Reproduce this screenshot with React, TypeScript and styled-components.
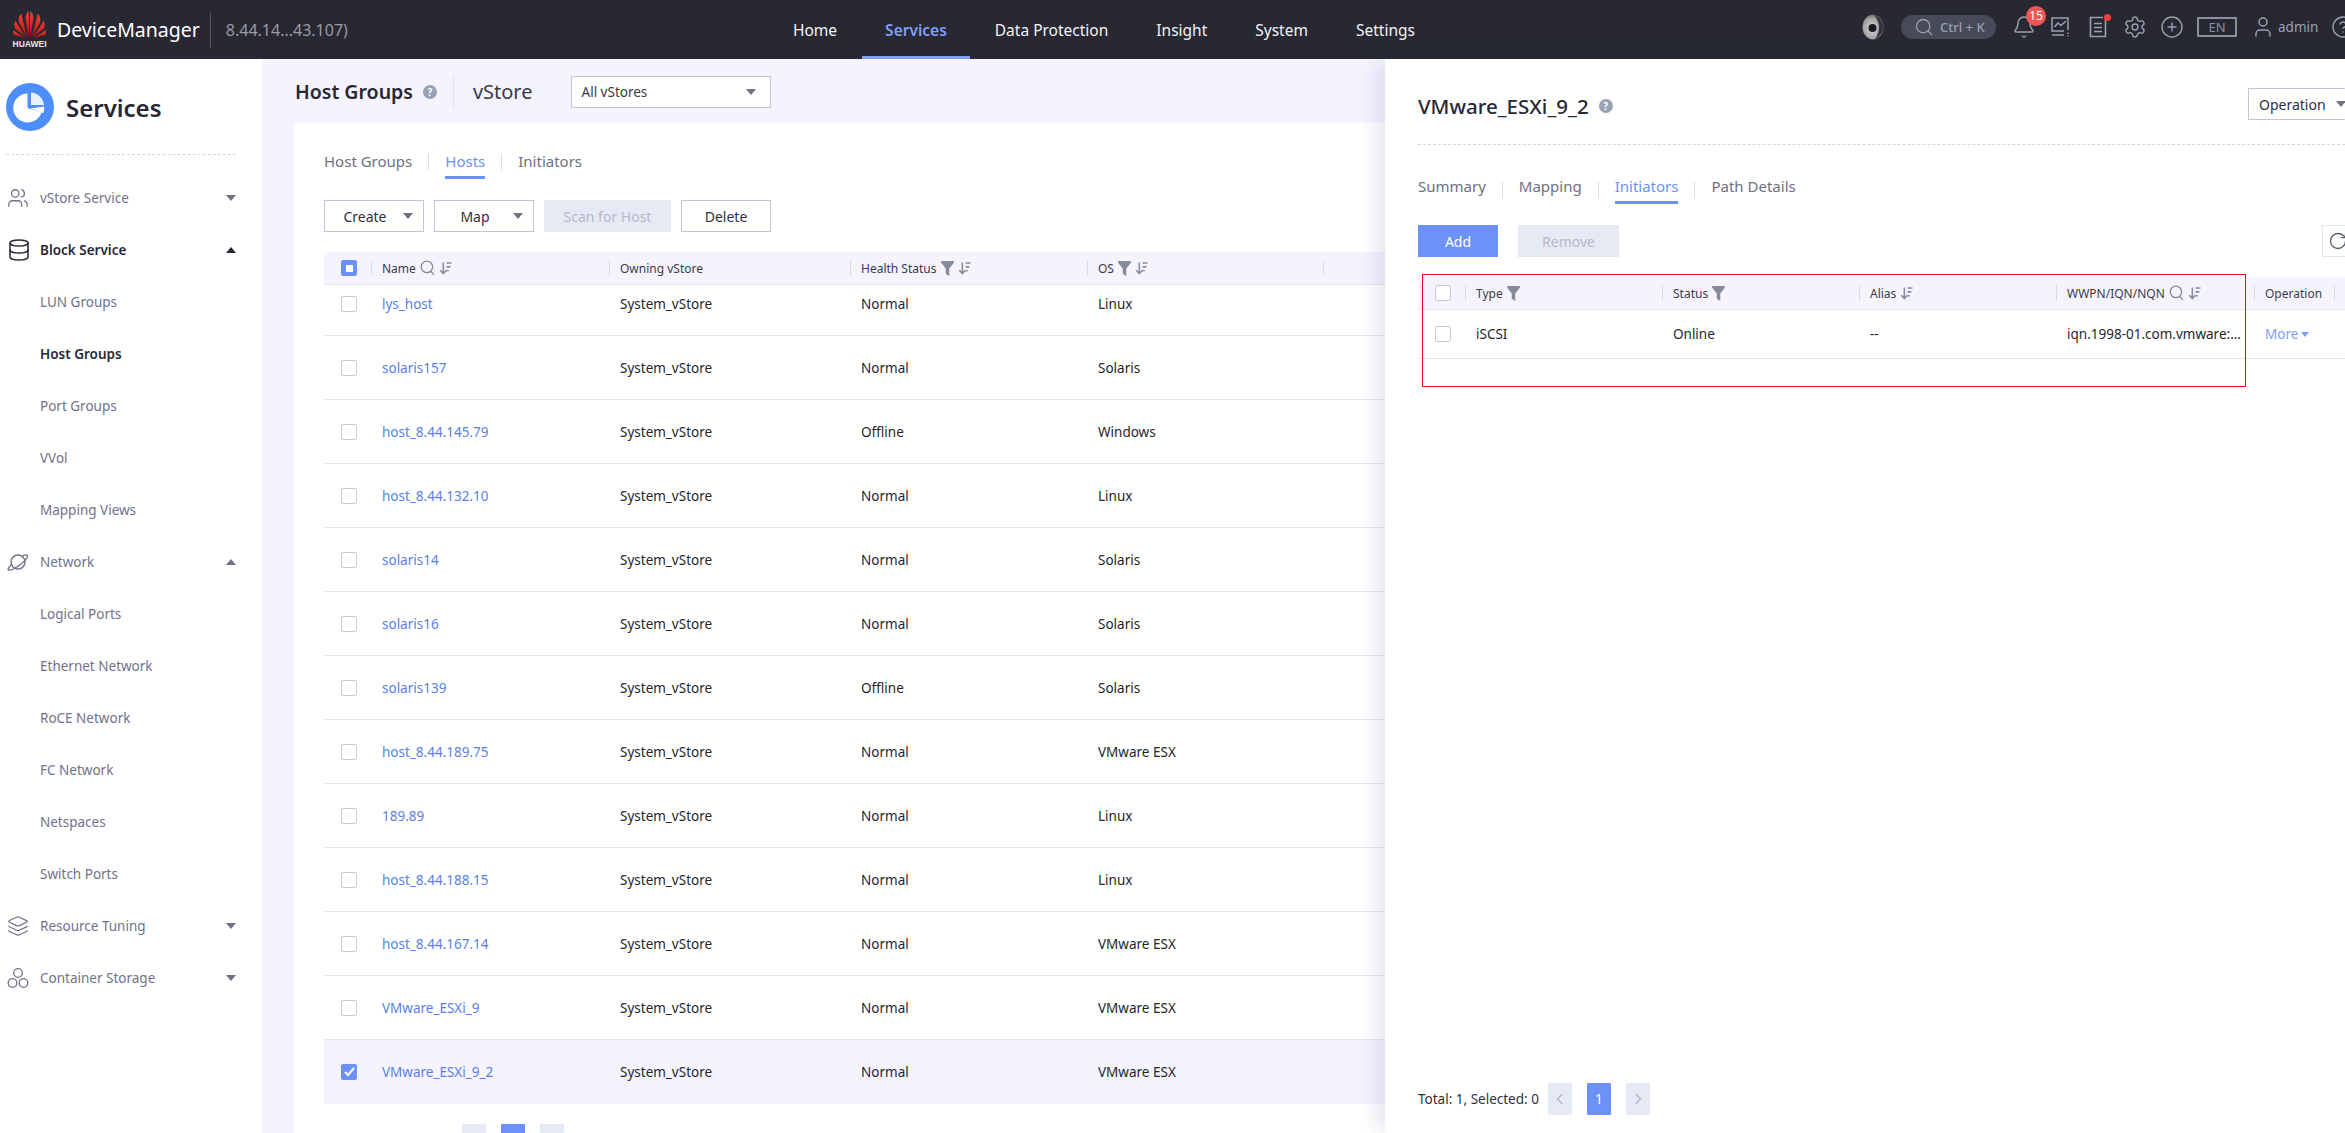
import React from "react";
import styled, { createGlobalStyle } from "styled-components";
import { Bell, CirclePlus, CircleHelp, Database, Layers, RotateCw, Search, Settings, User, Users } from "lucide-react";

const GlobalStyle = createGlobalStyle`
  html, body {
    margin: 0;
    padding: 0;
    background: #fff;
    font-family: "Noto Sans", "Open Sans", sans-serif;
  }
  * { box-sizing: border-box; }
`;

const hosts = [
  ["lys_host", "Normal", "Linux"],
  ["solaris157", "Normal", "Solaris"],
  ["host_8.44.145.79", "Offline", "Windows"],
  ["host_8.44.132.10", "Normal", "Linux"],
  ["solaris14", "Normal", "Solaris"],
  ["solaris16", "Normal", "Solaris"],
  ["solaris139", "Offline", "Solaris"],
  ["host_8.44.189.75", "Normal", "VMware ESX"],
  ["189.89", "Normal", "Linux"],
  ["host_8.44.188.15", "Normal", "Linux"],
  ["host_8.44.167.14", "Normal", "VMware ESX"],
  ["VMware_ESXi_9", "Normal", "VMware ESX"],
  ["VMware_ESXi_9_2", "Normal", "VMware ESX"],
];

const navItems = ["Home", "Services", "Data Protection", "Insight", "System", "Settings"];

const Page = styled.div`
  position: relative;
  width: 2345px;
  height: 1133px;
  overflow: hidden;
`;

const TopBar = styled.header`
  display: flex;
  align-items: center;
  height: 59px;
  background: #282833;
  color: #fff;
`;

const Brand = styled.div`
  display: flex;
  align-items: center;
  width: 770px;
  padding-left: 12px;
`;

const LogoBox = styled.div`
  display: flex;
  flex-direction: column;
  align-items: center;
  width: 35px;
`;

const LogoWord = styled.span`
  font-family: "Liberation Sans", sans-serif;
  font-size: 8.5px;
  font-weight: 700;
  line-height: 9px;
  margin-top: 1px;
  color: #e6e6e6;
`;

const BrandName = styled.span`
  margin-left: 10px;
  font-size: 19.5px;
  line-height: 36px;
  padding-right: 10px;
  border-right: 1px solid #55555f;
`;

const BrandHost = styled.span`
  margin-left: 15px;
  font-size: 16px;
  color: #9a9aa6;
`;

const Nav = styled.nav`
  display: flex;
  height: 59px;
`;

const NavItem = styled.div<{ $active?: boolean }>`
  display: flex;
  align-items: center;
  height: 59px;
  padding: 0 23px;
  margin-right: 2px;
  font-size: 15.5px;
  font-weight: ${({ $active }) => ($active ? 600 : 400)};
  color: ${({ $active }) => ($active ? "#7f9eff" : "#f2f2f5")};
  border-bottom: 3px solid ${({ $active }) => ($active ? "#7f9eff" : "transparent")};
  padding-top: 3px;
`;

const TopTools = styled.div`
  position: absolute;
  z-index: 3;
  top: 0;
  left: 1862px;
  height: 42px;
  display: flex;
  align-items: center;
  color: #9aa0b0;
  padding-top: 12px;
  & > * {
    flex: none;
  }
`;

const SearchPill = styled.div`
  display: flex;
  align-items: center;
  gap: 6px;
  width: 95px;
  height: 24px;
  margin-left: 17px;
  margin-right: 18px;
  padding-left: 13px;
  border-radius: 12px;
  background: #474b59;
  font-size: 13px;
  font-weight: 500;
  white-space: nowrap;
  color: #9aa0b0;
`;

const ToolIcon = styled.div<{ $gap?: number }>`
  position: relative;
  display: flex;
  align-items: center;
  justify-content: center;
  width: 20px;
  height: 20px;
  margin-right: ${({ $gap }) => $gap ?? 17}px;
  & > svg {
    flex: none;
  }
`;

const Badge = styled.span`
  position: absolute;
  top: -11px;
  left: 12px;
  width: 20px;
  height: 20px;
  border-radius: 50%;
  background: #f25555;
  color: #fff;
  font-size: 12px;
  line-height: 20px;
  text-align: center;
`;

const RedDot = styled.span`
  position: absolute;
  top: -3px;
  right: -3px;
  width: 7px;
  height: 7px;
  border-radius: 50%;
  background: #f53f3f;
`;

const LangBox = styled.div`
  width: 40px;
  height: 20px;
  margin-right: 16px;
  border: 2px solid #8a90a0;
  border-radius: 1px;
  font-size: 13px;
  line-height: 16px;
  text-align: center;
  color: #8a90a0;
`;

const UserName = styled.span`
  margin-right: 13px;
  font-size: 13.5px;
  color: #9aa0b0;
`;

const Body = styled.div`
  display: flex;
  height: 1074px;
`;

const Sidebar = styled.aside`
  flex: none;
  width: 262px;
  padding: 24px 26px 0 6px;
  background: #fff;
`;

const SideHead = styled.div`
  display: flex;
  align-items: center;
  gap: 12px;
  height: 48px;
  font-size: 24px;
  font-weight: 600;
  color: #282833;
`;

const SideRule = styled.div`
  margin-top: 23px;
  margin-bottom: 17px;
  border-top: 1px dashed #d5d5e6;
`;

const SideItem = styled.div<{ $strong?: boolean }>`
  display: flex;
  align-items: center;
  height: 52px;
  padding-left: 34px;
  font-size: 13.5px;
  font-weight: ${({ $strong }) => ($strong ? 600 : 400)};
  color: ${({ $strong }) => ($strong ? "#282833" : "#70728a")};
`;

const SideIcon = styled.span`
  display: flex;
  width: 24px;
  margin-left: -33px;
  margin-right: 9px;
  color: #6f7185;
`;

const Caret = styled.span<{ $up?: boolean; $small?: boolean; $color?: string }>`
  flex: none;
  width: 0;
  height: 0;
  border-left: ${({ $small }) => ($small ? 4 : 5)}px solid transparent;
  border-right: ${({ $small }) => ($small ? 4 : 5)}px solid transparent;
  ${({ $up }) => ($up ? "border-bottom" : "border-top")}: ${({ $small }) => ($small ? 5 : 6)}px solid ${({ $color }) => $color ?? "#6f7185"};
`;

const SideCaret = styled.span`
  display: flex;
  margin-left: auto;
`;

const Main = styled.main`
  flex: 1;
  min-width: 0;
  padding-left: 32px;
  background: #f5f3fe;
`;

const TitleBar = styled.div`
  display: flex;
  align-items: center;
  height: 64px;
  padding-left: 1px;
  padding-top: 1px;
`;

const PageTitle = styled.h1`
  margin: 0;
  font-size: 19.5px;
  font-weight: 600;
  color: #282833;
`;

const HelpDot = styled.span`
  flex: none;
  display: inline-block;
  width: 14px;
  height: 14px;
  margin-left: 10px;
  border-radius: 50%;
  background: #99a1b2;
  color: #fff;
  font-size: 10px;
  font-weight: 700;
  line-height: 14px;
  text-align: center;
`;

const TitleStore = styled.span`
  margin-left: 16px;
  padding-left: 19px;
  border-left: 1px solid #e4e2f2;
  font-size: 20px;
  line-height: 32px;
  color: #3a3a46;
`;

const StoreSelect = styled.div`
  display: flex;
  align-items: center;
  justify-content: space-between;
  width: 200px;
  height: 32px;
  margin-left: 38px;
  padding: 0 14px 0 10px;
  background: #fff;
  border: 1px solid #c4c4d4;
  font-size: 13.5px;
  color: #3a3a46;
`;

const Card = styled.section`
  height: 1010px;
  padding: 21px 0 0 30px;
  background: #fff;
`;

const Tabs = styled.div`
  display: flex;
  align-items: flex-start;
  height: 35px;
`;

const Tab = styled.div<{ $active?: boolean }>`
  height: 35px;
  padding-top: 7px;
  font-size: 15px;
  line-height: 21px;
  color: ${({ $active }) => ($active ? "#6c92fa" : "#6d7082")};
  border-bottom: 3px solid ${({ $active }) => ($active ? "#6c92fa" : "transparent")};
`;

const TabSep = styled.span`
  width: 1px;
  height: 16px;
  margin: 10px 16px 0;
  background: #dcdce8;
`;

const Toolbar = styled.div`
  display: flex;
  gap: 10px;
  margin-top: 21px;
`;

const Button = styled.div<{ $w: number; $kind?: "off" | "primary" }>`
  display: flex;
  align-items: center;
  justify-content: center;
  width: ${({ $w }) => $w}px;
  height: 32px;
  font-size: 14px;
  background: ${({ $kind }) => ($kind === "off" ? "#e6eaf5" : $kind === "primary" ? "#6c92fa" : "#fff")};
  color: ${({ $kind }) => ($kind === "off" ? "#b5b9c9" : $kind === "primary" ? "#fff" : "#30303c")};
  border: 1px solid ${({ $kind }) => ($kind === "off" ? "#e6eaf5" : $kind === "primary" ? "#6c92fa" : "#c4c4d4")};
`;

const MenuButton = styled(Button)`
  padding-right: 10px;
`;

const ButtonLabel = styled.span`
  flex: 1;
  text-align: center;
  padding-left: 2px;
`;

const HostTable = styled.div`
  margin-top: 20px;
  width: 1100px;
`;

const HeadRow = styled.div<{ $cols: string }>`
  display: grid;
  grid-template-columns: ${({ $cols }) => $cols};
  align-items: center;
  height: 33px;
  background: #f5f3fe;
  border-bottom: 1px solid #e4e4f2;
`;

const HeadCell = styled.div`
  display: flex;
  align-items: center;
  gap: 4px;
  height: 16px;
  padding-left: 10px;
  border-left: 1px solid #dcdce8;
  font-size: 12px;
  color: #3c3c48;
  white-space: nowrap;
  overflow: hidden;
`;

const BoxCell = styled.div`
  display: flex;
  padding-left: 17px;
`;

const CheckBox = styled.span<{ $state?: "on" | "part" }>`
  display: flex;
  align-items: center;
  justify-content: center;
  width: 16px;
  height: 16px;
  border-radius: 2px;
  border: 1px solid ${({ $state }) => ($state ? "#6c92fa" : "#c9c9d6")};
  background: ${({ $state }) => ($state ? "#6c92fa" : "#fff")};
`;

const PartMark = styled.span`
  width: 7px;
  height: 7px;
  background: #fff;
`;

const RowClip = styled.div`
  overflow: hidden;
  height: 819px;
`;

const HostRow = styled.div<{ $cols: string; $selected?: boolean }>`
  display: grid;
  grid-template-columns: ${({ $cols }) => $cols};
  align-items: center;
  height: 64px;
  background: ${({ $selected }) => ($selected ? "#f5f3fe" : "#fff")};
  border-bottom: 1px solid ${({ $selected }) => ($selected ? "#f5f3fe" : "#e8e8f4")};
  &:first-child {
    margin-top: -13px;
  }
`;

const Cell = styled.div`
  padding-left: 11px;
  font-size: 13.5px;
  color: #25252f;
  white-space: nowrap;
  overflow: hidden;
`;

const NameLink = styled(Cell)`
  color: #5b7fe6;
`;

const Pager = styled.div`
  display: flex;
  gap: 15px;
  padding-top: 20px;
  padding-left: 138px;
`;

const PageBox = styled.span<{ $current?: boolean }>`
  width: 24px;
  height: 32px;
  background: ${({ $current }) => ($current ? "#6c92fa" : "#e6eaf5")};
`;

const Drawer = styled.aside`
  position: absolute;
  z-index: 2;
  top: 59px;
  bottom: 0;
  left: 1385px;
  right: 0;
  padding: 0 0 0 33px;
  background: #fff;
  box-shadow: -14px 0 16px -4px rgba(90, 100, 150, 0.14);
`;

const DrawerTopShade = styled.div`
  position: absolute;
  top: -17px;
  left: -20px;
  right: 0;
  height: 17px;
  background: #232833;
  border-radius: 10px 0 0 0;
`;

const DrawerHead = styled.div`
  display: flex;
  align-items: center;
  height: 86px;
  border-bottom: 1px dashed #d5d5e6;
`;

const DrawerTitle = styled.h2`
  margin: 8px 0 0;
  font-size: 20.5px;
  font-weight: 500;
  color: #282833;
`;

const DrawerHelp = styled(HelpDot)`
  margin-top: 8px;
`;

const OperationBtn = styled.div`
  flex: none;
  display: flex;
  align-items: center;
  gap: 10px;
  width: 97px;
  height: 32px;
  margin-left: auto;
  margin-top: 5px;
  padding-left: 10px;
  border: 1px solid #c4c4d4;
  border-right: none;
  border-radius: 1px;
  font-size: 14px;
  color: #30303c;
`;

const DrawerTabs = styled(Tabs)`
  margin-top: 27px;
  height: 32px;
`;

const DrawerTab = styled(Tab)`
  height: 32px;
  padding-top: 4px;
`;

const DrawerActions = styled.div`
  display: flex;
  gap: 20px;
  margin-top: 21px;
  position: relative;
`;

const RefreshBtn = styled.div`
  position: absolute;
  top: 0;
  left: 904px;
  display: flex;
  align-items: center;
  justify-content: center;
  width: 32px;
  height: 32px;
  border: 1px solid #e4e4ee;
  color: #5c5f70;
`;

const InitiatorTable = styled.div`
  position: relative;
  margin-top: 20px;
  width: 960px;
`;

const RedFrame = styled.div`
  position: absolute;
  top: -3px;
  left: 4px;
  width: 824px;
  height: 113px;
  border: 1.5px solid #f00a14;
  pointer-events: none;
`;

const InitiatorRow = styled.div<{ $cols: string }>`
  display: grid;
  grid-template-columns: ${({ $cols }) => $cols};
  align-items: center;
  height: 49px;
  background: #fff;
  border-bottom: 1px solid #e8e8f4;
`;

const MoreLink = styled.span`
  display: flex;
  align-items: center;
  gap: 3px;
  font-size: 13.5px;
  color: #7f9eff;
`;

const DrawerFoot = styled.div`
  position: absolute;
  left: 33px;
  top: 1024px;
  display: flex;
  align-items: center;
  gap: 15px;
  font-size: 13.5px;
  color: #30303c;
`;

const FootText = styled.span`
  margin-right: -6px;
`;

const FootPage = styled.span<{ $current?: boolean }>`
  display: flex;
  align-items: center;
  justify-content: center;
  width: 24px;
  height: 32px;
  border-radius: 1px;
  background: ${({ $current }) => ($current ? "#6c92fa" : "#e6eaf5")};
  color: ${({ $current }) => ($current ? "#fff" : "#b5b9c9")};
`;

const Funnel = () => (
  <svg width="13" height="15" viewBox="0 0 11 13" fill="#858a9c">
    <path d="M0 0h11v1.6L7 6.5V13L4 11V6.5L0 1.6z" />
  </svg>
);

const SortMark = () => (
  <svg width="13" height="15" viewBox="0 0 12 13" fill="none" stroke="#858a9c" strokeWidth="1.4">
    <path d="M4 1v10M1.200 8.200 4 11.200 6.800 8.200" />
    <path d="M7 1.500h4.500M7 5h3.500M7 8.500h2" />
  </svg>
);

const Glass = () => (
  <svg width="15" height="16" viewBox="0 0 13 14" fill="none" stroke="#858a9c" strokeWidth="1.2">
    <circle cx="6" cy="6" r="5" />
    <path d="M9.500 10 12 13" />
  </svg>
);

const Tick = () => (
  <svg width="11" height="10" viewBox="0 0 11 10" fill="none" stroke="#fff" strokeWidth="2">
    <path d="M1 5l3 3 6-7" />
  </svg>
);

const HuaweiMark = () => (
  <svg width="35" height="28" viewBox="0 0 35 30">
    <defs>
      <linearGradient id="petal" x1="0" y1="0" x2="0" y2="1">
        <stop offset="0" stopColor="#f04030" />
        <stop offset="1" stopColor="#b80f10" />
      </linearGradient>
    </defs>
    <g fill="url(#petal)">
      <path d="M16.600 28 13.400 9c-.6-4 1-7 3.200-9 .5 8 .6 19 0 28z" />
      <path d="M18.400 28 21.600 9c.6-4-1-7-3.200-9-.5 8-.6 19 0 28z" />
      <path d="M15.200 28 6.600 13C5 10 6.200 5 8.800 3c1.500 7 4 17 6.400 25z" />
      <path d="M19.800 28 28.400 13c1.600-3 .4-8-2.200-10-1.500 7-4 17-6.400 25z" />
      <path d="M14 28 2.400 19C.8 16.500 1 13 2.400 10.500 5.500 16 10 23 14 28z" />
      <path d="M21 28 32.600 19c1.600-2.500 1.400-6 0-8.500C29.500 16 25 23 21 28z" />
      <path d="M13 29 0.800 25.500C0 24 0 22 .4 20.500 4 23 9 26.500 13 29z" />
      <path d="M22 29 34.200 25.500c.8-1.500.8-3.500.4-5C31 23 26 26.500 22 29z" />
    </g>
  </svg>
);

const ServicesMark = () => (
  <svg width="48" height="48" viewBox="0 0 48 48">
    <circle cx="24" cy="24" r="24" fill="#4e8efb" />
    <path d="M21.500 10.500a14.500 14.500 0 1 0 14 19L21.500 25z" fill="#fff" />
    <path d="M25 9.500a14 14 0 0 1 13 12.500H25z" fill="#eaf1ff" />
    <path d="M24.500 25.500 38 23.500c.4 2.500 0 5-1 6.800z" fill="#fff" />
  </svg>
);

const PlanetMark = () => (
  <svg width="22" height="18" viewBox="0 0 22 18" fill="none" stroke="#6f7185" strokeWidth="1.4">
    <circle cx="11" cy="9" r="7" />
    <path d="M4.500 11.500C2 14 .5 16 1.500 16.800c1.500 1 6-1 10.500-4.300 5-3.700 9-8 8.400-10-.4-1-2.500-.8-4.900.3" />
  </svg>
);

const ContainerMark = () => (
  <svg width="22" height="22" viewBox="0 0 22 22" fill="none" stroke="#6f7185" strokeWidth="1.3">
    <circle cx="11" cy="6" r="4.300" />
    <circle cx="5.500" cy="16" r="4.300" />
    <circle cx="16.500" cy="16" r="4.300" />
  </svg>
);

const EyeMark = () => (
  <svg width="22" height="26" viewBox="0 0 22 26">
    <defs>
      <radialGradient id="eye" cx="0.45" cy="0.55" r="0.6">
        <stop offset="0" stopColor="#d8d8d8" />
        <stop offset="0.7" stopColor="#a0a0a0" />
        <stop offset="1" stopColor="#555" />
      </radialGradient>
    </defs>
    <ellipse cx="11" cy="13" rx="10.500" ry="12.500" fill="url(#eye)" />
    <circle cx="10.500" cy="14" r="4" fill="#1c1c20" />
    <path d="M12 1c5 1 9 6 9 12s-4 10-8 12c3-4 4-8 4-12s-2-9-5-12z" fill="#33333a" />
  </svg>
);

const ChartMark = () => (
  <svg width="20" height="20" viewBox="0 0 20 20" fill="none" stroke="#9aa0b0" strokeWidth="1.5">
    <path d="M17 13V1H1v13h12" />
    <path d="M3.500 10 7 6l3 2.500L15 4" />
    <path d="M1 18h12M17 15.500v1.500M17 18.500v1" />
  </svg>
);

const DocMark = () => (
  <svg width="20" height="22" viewBox="0 0 20 22" fill="none" stroke="#9aa0b0" strokeWidth="1.6">
    <path d="M15 1.500H2.500v19h15V4" />
    <path d="M6 7.500h8M6 11.500h8M6 15.500h8" />
  </svg>
);

const hostCols = "47px 238px 241px 237px 236px 88px";
const initCols = "47px 197px 197px 197px 198px 80px 1fr";

const sideItems: { label: string; icon?: React.ReactNode; caret?: "up" | "down"; strong?: boolean }[] = [
  { label: "vStore Service", icon: <Users size={22} strokeWidth={1.4} />, caret: "down" },
  { label: "Block Service", icon: <Database size={24} strokeWidth={1.5} color="#282833" />, caret: "up", strong: true },
  { label: "LUN Groups" },
  { label: "Host Groups", strong: true },
  { label: "Port Groups" },
  { label: "VVol" },
  { label: "Mapping Views" },
  { label: "Network", icon: <PlanetMark />, caret: "up" },
  { label: "Logical Ports" },
  { label: "Ethernet Network" },
  { label: "RoCE Network" },
  { label: "FC Network" },
  { label: "Netspaces" },
  { label: "Switch Ports" },
  { label: "Resource Tuning", icon: <Layers size={22} strokeWidth={1.3} />, caret: "down" },
  { label: "Container Storage", icon: <ContainerMark />, caret: "down" },
];

export default function App() {
  return (
    <Page>
      <GlobalStyle />
      <TopBar>
        <Brand>
          <LogoBox>
            <HuaweiMark />
            <LogoWord>HUAWEI</LogoWord>
          </LogoBox>
          <BrandName>DeviceManager</BrandName>
          <BrandHost>8.44.14...43.107)</BrandHost>
        </Brand>
        <Nav>
          {navItems.map((item) => (
            <NavItem key={item} $active={item === "Services"}>
              {item}
            </NavItem>
          ))}
        </Nav>
      </TopBar>
      <TopTools>
        <EyeMark />
        <SearchPill>
          <Search size={20} strokeWidth={1.6} />
          Ctrl + K
        </SearchPill>
        <ToolIcon>
          <Bell size={24} strokeWidth={1.4} />
          <Badge>15</Badge>
        </ToolIcon>
        <ToolIcon>
          <ChartMark />
        </ToolIcon>
        <ToolIcon>
          <DocMark />
          <RedDot />
        </ToolIcon>
        <ToolIcon>
          <Settings size={24} strokeWidth={1.4} />
        </ToolIcon>
        <ToolIcon $gap={15}>
          <CirclePlus size={24} strokeWidth={1.4} />
        </ToolIcon>
        <LangBox>EN</LangBox>
        <ToolIcon $gap={5}>
          <User size={24} strokeWidth={1.5} />
        </ToolIcon>
        <UserName>admin</UserName>
        <CircleHelp size={24} strokeWidth={1.4} />
      </TopTools>
      <Body>
        <Sidebar>
          <SideHead>
            <ServicesMark />
            Services
          </SideHead>
          <SideRule />
          {sideItems.map((item) => (
            <SideItem key={item.label} $strong={item.strong}>
              {item.icon && <SideIcon>{item.icon}</SideIcon>}
              {item.label}
              {item.caret && (
                <SideCaret>
                  <Caret $up={item.caret === "up"} $color={item.strong ? "#282833" : undefined} />
                </SideCaret>
              )}
            </SideItem>
          ))}
        </Sidebar>
        <Main>
          <TitleBar>
            <PageTitle>Host Groups</PageTitle>
            <HelpDot>?</HelpDot>
            <TitleStore>vStore</TitleStore>
            <StoreSelect>
              All vStores
              <Caret />
            </StoreSelect>
          </TitleBar>
          <Card>
            <Tabs>
              <Tab>Host Groups</Tab>
              <TabSep />
              <Tab $active>Hosts</Tab>
              <TabSep />
              <Tab>Initiators</Tab>
            </Tabs>
            <Toolbar>
              <MenuButton $w={100}>
                <ButtonLabel>Create</ButtonLabel>
                <Caret />
              </MenuButton>
              <MenuButton $w={100}>
                <ButtonLabel>Map</ButtonLabel>
                <Caret />
              </MenuButton>
              <Button $w={127} $kind="off">
                Scan for Host
              </Button>
              <Button $w={90}>Delete</Button>
            </Toolbar>
            <HostTable>
              <HeadRow $cols={hostCols}>
                <BoxCell>
                  <CheckBox $state="part">
                    <PartMark />
                  </CheckBox>
                </BoxCell>
                <HeadCell>
                  Name <Glass /> <SortMark />
                </HeadCell>
                <HeadCell>Owning vStore</HeadCell>
                <HeadCell>
                  Health Status <Funnel /> <SortMark />
                </HeadCell>
                <HeadCell>
                  OS <Funnel /> <SortMark />
                </HeadCell>
                <HeadCell />
              </HeadRow>
              <RowClip>
                {hosts.map(([name, health, os], i) => {
                  const selected = i === hosts.length - 1;
                  return (
                    <HostRow key={name} $cols={hostCols} $selected={selected}>
                      <BoxCell>
                        <CheckBox $state={selected ? "on" : undefined}>{selected && <Tick />}</CheckBox>
                      </BoxCell>
                      <NameLink>{name}</NameLink>
                      <Cell>System_vStore</Cell>
                      <Cell>{health}</Cell>
                      <Cell>{os}</Cell>
                    </HostRow>
                  );
                })}
              </RowClip>
              <Pager>
                <PageBox />
                <PageBox $current />
                <PageBox />
              </Pager>
            </HostTable>
          </Card>
        </Main>
      </Body>
      <Drawer>
        <DrawerTopShade />
        <DrawerHead>
          <DrawerTitle>VMware_ESXi_9_2</DrawerTitle>
          <DrawerHelp>?</DrawerHelp>
          <OperationBtn>
            Operation
            <Caret />
          </OperationBtn>
        </DrawerHead>
        <DrawerTabs>
          <DrawerTab>Summary</DrawerTab>
          <TabSep />
          <DrawerTab>Mapping</DrawerTab>
          <TabSep />
          <DrawerTab $active>Initiators</DrawerTab>
          <TabSep />
          <DrawerTab>Path Details</DrawerTab>
        </DrawerTabs>
        <DrawerActions>
          <Button $w={80} $kind="primary">
            Add
          </Button>
          <Button $w={101} $kind="off">
            Remove
          </Button>
          <RefreshBtn>
            <RotateCw size={20} strokeWidth={1.6} />
          </RefreshBtn>
        </DrawerActions>
        <InitiatorTable>
          <HeadRow $cols={initCols}>
            <BoxCell>
              <CheckBox />
            </BoxCell>
            <HeadCell>
              Type <Funnel />
            </HeadCell>
            <HeadCell>
              Status <Funnel />
            </HeadCell>
            <HeadCell>
              Alias <SortMark />
            </HeadCell>
            <HeadCell>
              WWPN/IQN/NQN <Glass /> <SortMark />
            </HeadCell>
            <HeadCell>Operation</HeadCell>
            <HeadCell>
              <SortMark />
            </HeadCell>
          </HeadRow>
          <InitiatorRow $cols={initCols}>
            <BoxCell>
              <CheckBox />
            </BoxCell>
            <Cell>iSCSI</Cell>
            <Cell>Online</Cell>
            <Cell>--</Cell>
            <Cell>iqn.1998-01.com.vmware:...</Cell>
            <Cell>
              <MoreLink>
                More
                <Caret $small $color="#7f9eff" />
              </MoreLink>
            </Cell>
          </InitiatorRow>
          <RedFrame />
        </InitiatorTable>
        <DrawerFoot>
          <FootText>Total: 1, Selected: 0</FootText>
          <FootPage>
            <svg width="8" height="12" viewBox="0 0 8 12" fill="none" stroke="#b5b9c9" strokeWidth="1.5">
              <path d="M6.500 1 1.500 6l5 5" />
            </svg>
          </FootPage>
          <FootPage $current>1</FootPage>
          <FootPage>
            <svg width="8" height="12" viewBox="0 0 8 12" fill="none" stroke="#b5b9c9" strokeWidth="1.5">
              <path d="M1.500 1l5 5-5 5" />
            </svg>
          </FootPage>
        </DrawerFoot>
      </Drawer>
    </Page>
  );
}
